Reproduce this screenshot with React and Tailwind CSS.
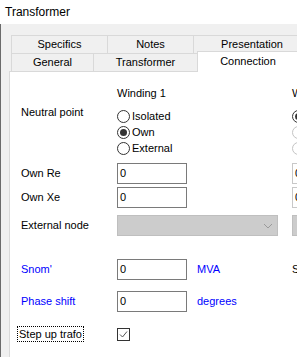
const Radio = ({ checked, light }) => (
  <span
    className={`w-[13px] h-[13px] rounded-full border bg-white flex items-center justify-center shrink-0 ${
      light ? 'border-[#c4c4c4]' : 'border-[#333333]'
    }`}
  >
    {checked && <span className="w-[7px] h-[7px] rounded-full bg-[#333333]" />}
  </span>
);

const Input = ({ light }) => (
  <div
    className={`h-[21px] w-[70px] shrink-0 bg-white border flex items-center pl-[2px] ${
      light ? 'border-[#c8c8c8]' : 'border-[#7a7a7a]'
    }`}
  >
    0
  </div>
);

const Combo = ({ w }) => (
  <div className={`h-[21px] ${w} shrink-0 bg-[#cccccc] border border-[#bfbfbf] flex items-center justify-end pr-[4px]`}>
    <svg width="10" height="6" viewBox="0 0 10 6" className="mr-[0px]">
      <path d="M1 1 L5 5 L9 1" fill="none" stroke="#9a9a9a" strokeWidth="1" />
    </svg>
  </div>
);

export default function App() {
  return (
    <div className="w-[297px] h-[357px] overflow-hidden bg-[#f0f0f0] flex flex-col font-['Liberation_Sans',Arial,sans-serif] text-[11px] text-black leading-[13px]">
      <div className="h-[24px] shrink-0 bg-white flex items-center pl-[5px] text-[12px] leading-[14px]">
        Transformer
      </div>
      <div className="flex-1 border-l border-[#6b6b6b] pl-[8px] pt-[11px] flex flex-col">
        {/* tab row 1 */}
        <div className="flex h-[18px] ml-[2px] shrink-0">
          <div className="w-[96px] shrink-0 border-t border-l border-[#d9d9d9] flex items-center justify-center">Specifics</div>
          <div className="w-[86px] shrink-0 border-t border-l border-[#d9d9d9] flex items-center justify-center">Notes</div>
          <div className="w-[118px] shrink-0 border-t border-l border-r border-[#d9d9d9] flex items-center justify-center">Presentation</div>
        </div>
        {/* tab row 2 */}
        <div className="flex h-[18px] ml-[2px] shrink-0">
          <div className="w-[82px] shrink-0 border-t border-l border-[#d9d9d9] flex items-center justify-center">General</div>
          <div className="w-[104px] shrink-0 border-t border-l border-[#d9d9d9] flex items-center justify-center">Transformer</div>
          <div className="relative z-10 w-[102px] h-[21px] mt-[-2px] shrink-0 bg-white border-t border-l border-r border-[#d9d9d9] flex items-start justify-center pt-[3px]">
            Connection
          </div>
        </div>
        {/* panel */}
        <div className="flex-1 bg-white border-t border-l border-[#d9d9d9] pl-[11px] flex flex-col">
          <div className="flex h-[13px] mt-[15px] shrink-0">
            <div className="w-[96px] shrink-0" />
            <div className="w-[175px] shrink-0">Winding 1</div>
            <div className="shrink-0 whitespace-nowrap">Winding 2</div>
          </div>

          <div className="flex items-start mt-[6px] shrink-0">
            <div className="w-[96px] shrink-0">Neutral point</div>
            <div className="w-[175px] shrink-0 pt-[2px] flex flex-col">
              <div className="h-[16px] flex items-center gap-[2px]"><Radio /><span>Isolated</span></div>
              <div className="h-[16px] flex items-center gap-[2px]"><Radio checked /><span>Own</span></div>
              <div className="h-[16px] flex items-center gap-[2px]"><Radio /><span>External</span></div>
            </div>
            <div className="shrink-0 pt-[2px] flex flex-col">
              <div className="h-[16px] flex items-center"><Radio checked /></div>
              <div className="h-[16px] flex items-center"><Radio light /></div>
              <div className="h-[16px] flex items-center"><Radio light /></div>
            </div>
          </div>

          <div className="flex items-center h-[21px] mt-[7px] shrink-0">
            <div className="w-[96px] shrink-0">Own Re</div>
            <div className="w-[175px] shrink-0"><Input /></div>
            <Input light />
          </div>

          <div className="flex items-center h-[21px] mt-[3px] shrink-0">
            <div className="w-[96px] shrink-0">Own Xe</div>
            <div className="w-[175px] shrink-0"><Input /></div>
            <Input light />
          </div>

          <div className="flex items-center h-[21px] mt-[7px] shrink-0">
            <div className="w-[96px] shrink-0">External node</div>
            <div className="w-[175px] shrink-0"><Combo w="w-[161px]" /></div>
            <Combo w="w-[161px]" />
          </div>

          <div className="flex items-center h-[21px] mt-[23px] shrink-0">
            <div className="w-[96px] shrink-0 text-[#0000ff]">Snom'</div>
            <div className="w-[175px] shrink-0 flex items-center">
              <Input />
              <span className="ml-[10px] text-[#0000ff]">MVA</span>
            </div>
            <div className="shrink-0 whitespace-nowrap">Snom</div>
          </div>

          <div className="flex items-center h-[21px] mt-[11px] shrink-0">
            <div className="w-[96px] shrink-0 text-[#0000ff]">Phase shift</div>
            <div className="w-[175px] shrink-0 flex items-center">
              <Input />
              <span className="ml-[10px] text-[#0000ff]">degrees</span>
            </div>
          </div>

          <div className="flex items-center h-[18px] mt-[13px] shrink-0">
            <div className="w-[96px] shrink-0">
              <span className="ml-[-4px] inline-block border border-dotted border-black pl-[1px] pr-[1px] leading-[14px]">
                Step up trafo
              </span>
            </div>
            <div className="w-[13px] h-[13px] border border-[#333333] bg-white flex items-center justify-center">
              <svg width="11" height="11" viewBox="0 0 11 11">
                <path d="M2 5.5 L4.5 8 L9 2.5" fill="none" stroke="#555555" strokeWidth="1" />
              </svg>
            </div>
          </div>
        </div>
      </div>
    </div>
  );
}
